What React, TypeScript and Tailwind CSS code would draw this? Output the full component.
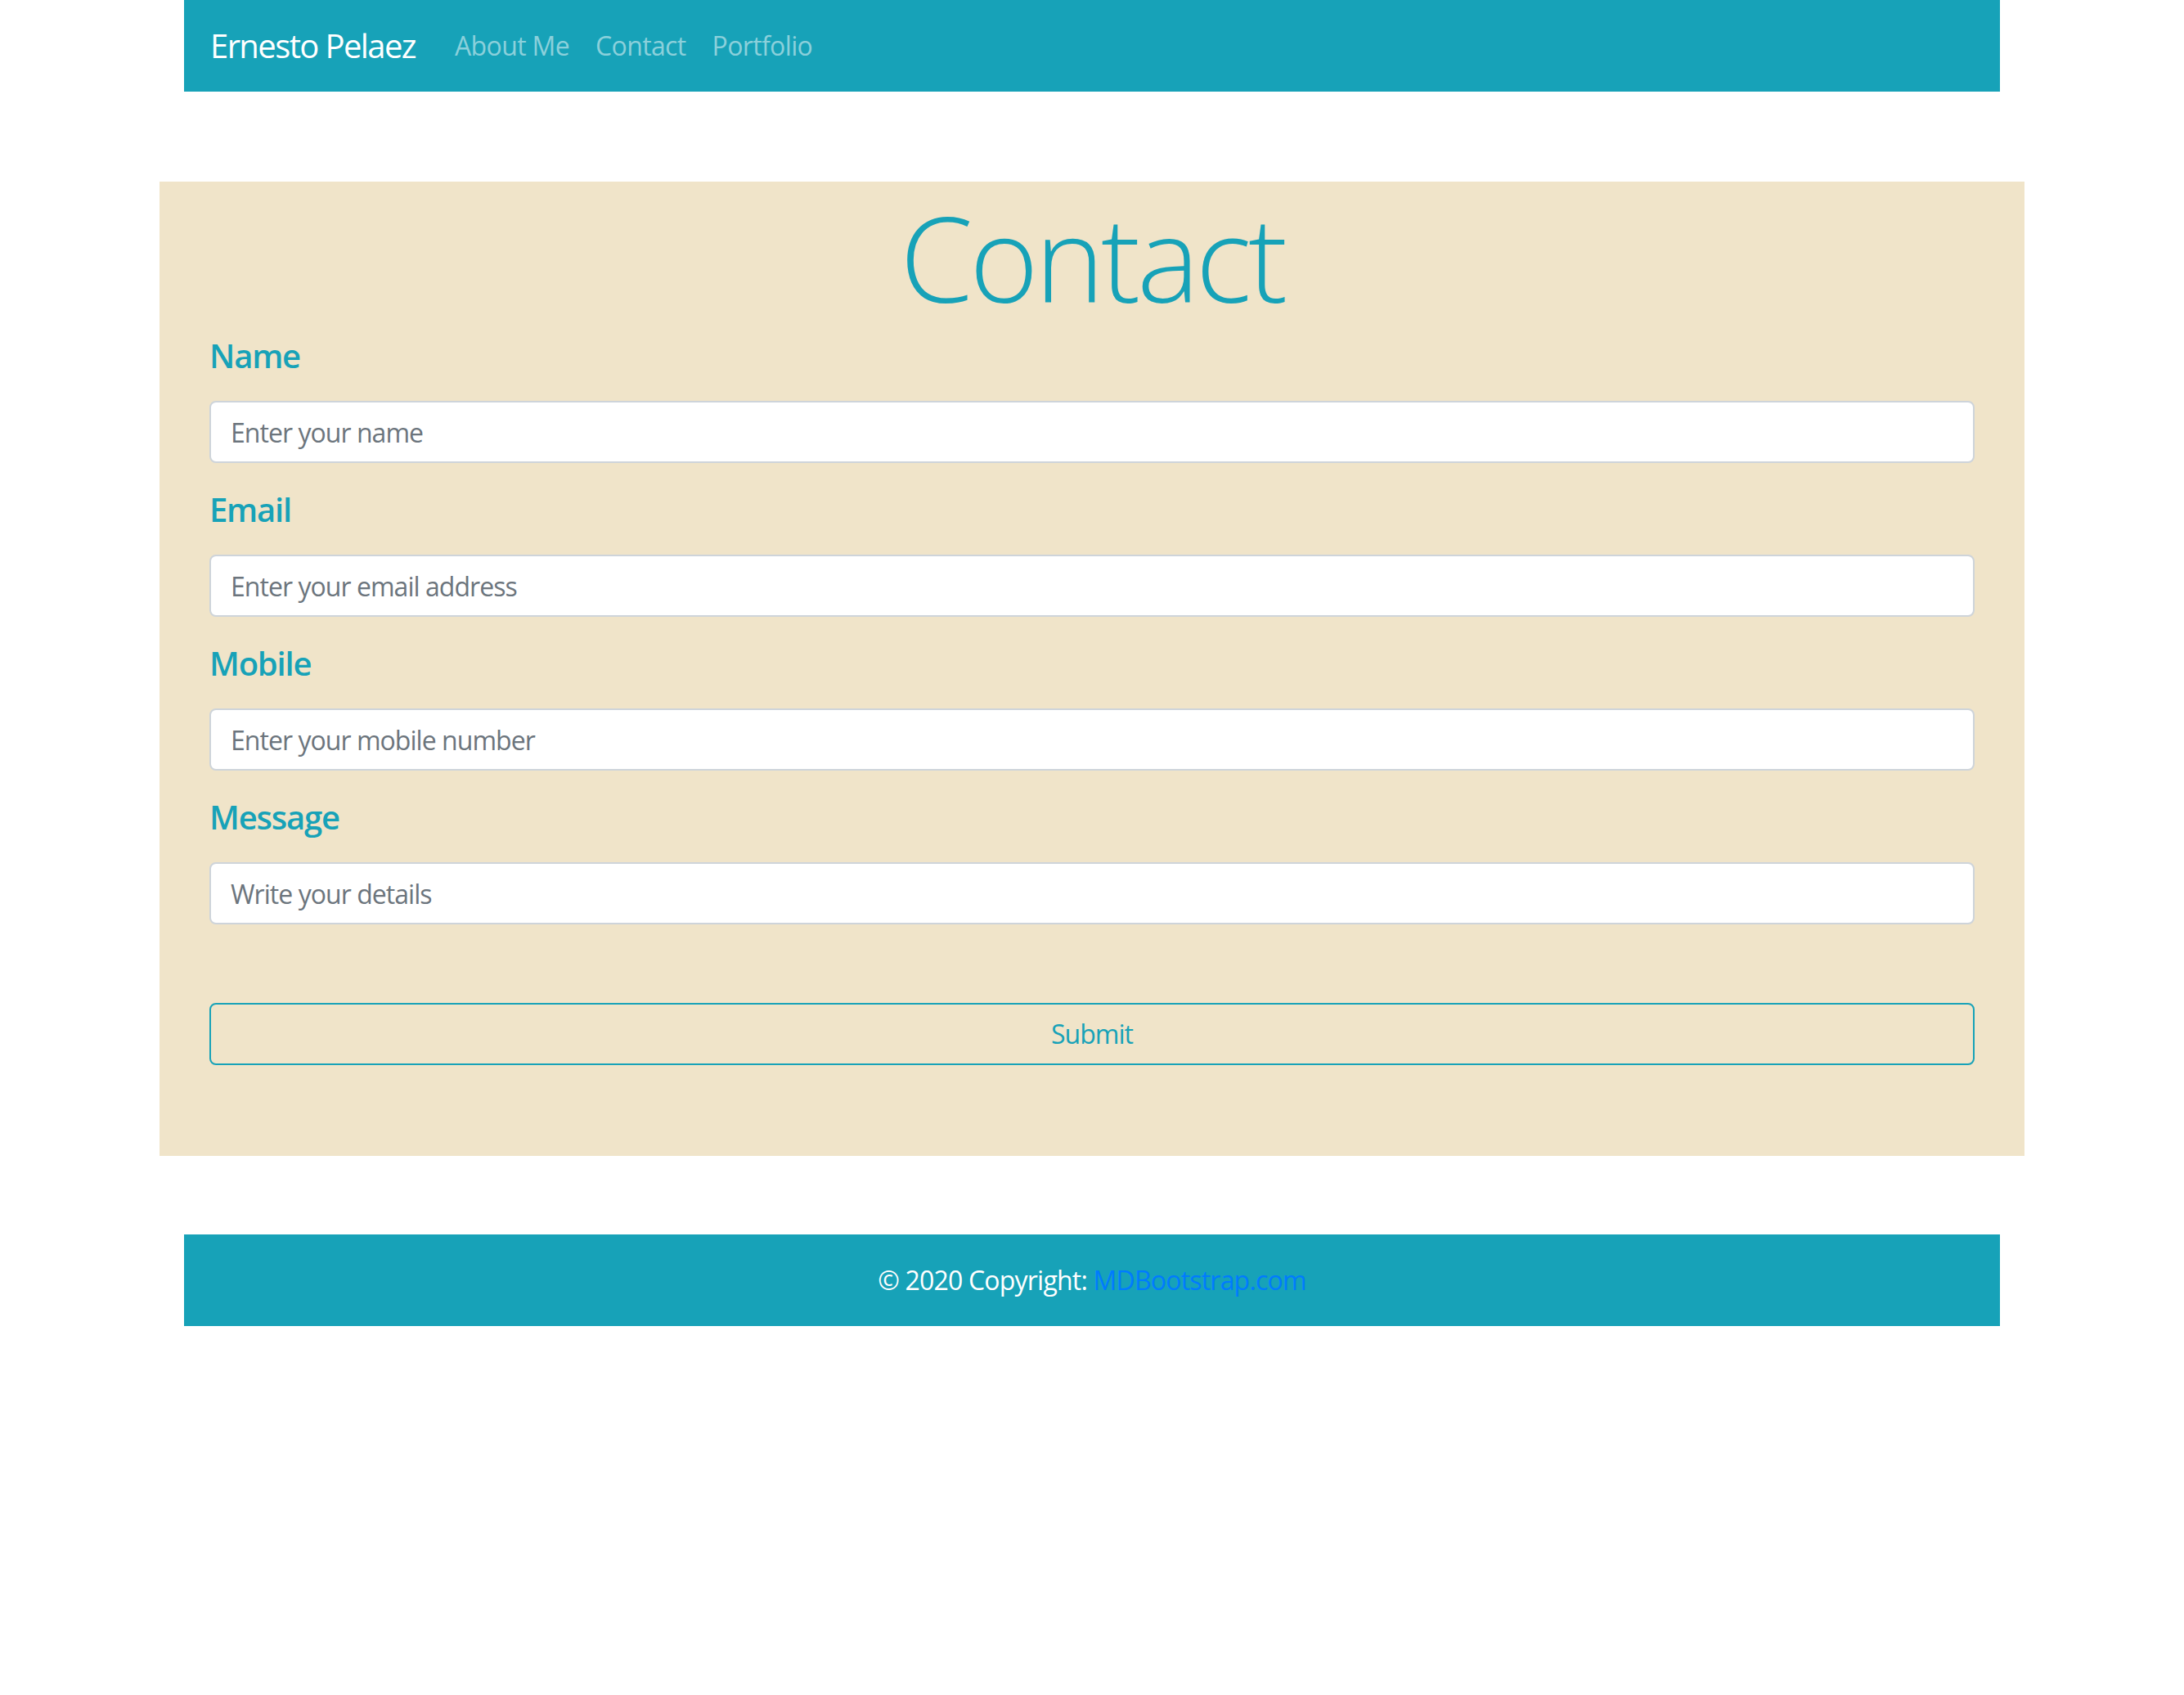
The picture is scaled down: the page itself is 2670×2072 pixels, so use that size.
import React from 'react';

const fields = [
  { label: 'Name', placeholder: 'Enter your name', type: 'text' },
  { label: 'Email', placeholder: 'Enter your email address', type: 'email' },
  { label: 'Mobile', placeholder: 'Enter your mobile number', type: 'tel' },
  { label: 'Message', placeholder: 'Write your details', type: 'text' },
];

export default function App() {
  return (
    <div className="min-h-[2072px] bg-white font-['Open_Sans','Noto_Sans',sans-serif]">
      {/* Navbar */}
      <nav className="mx-auto flex h-[112px] w-[2220px] items-center bg-[#17a2b8] px-8">
        <span className="mr-8 text-[40px] leading-[60px] tracking-[-0.04em] text-white">
          Ernesto Pelaez
        </span>
        <div className="flex items-center">
          {['About Me', 'Contact', 'Portfolio'].map((link) => (
            <a
              key={link}
              href="#"
              className="px-4 text-[32px] leading-[48px] tracking-[-0.02em] text-[#8bd0db]"
            >
              {link}
            </a>
          ))}
        </div>
      </nav>

      {/* Contact form */}
      <section className="mx-auto mt-[110px] w-[2280px] bg-[#f0e4c9] px-[61px] pt-[6px] pb-[111px]">
        <h1 className="text-center text-[144px] font-light leading-[173px] tracking-[-0.03em] text-[#17a2b8]">
          Contact
        </h1>
        <form className="mt-[10px]" onSubmit={(e) => e.preventDefault()}>
          {fields.map((f) => (
            <div key={f.label} className="mb-[33px]">
              <label className="mb-[31px] block text-[40px] font-semibold leading-[48px] tracking-[-0.03em] text-[#17a2b8]">
                {f.label}
              </label>
              <input
                type={f.type}
                placeholder={f.placeholder}
                className="block h-[76px] w-full rounded-[8px] border-2 border-[#ced4da] bg-white px-6 text-[32px] tracking-[-0.03em] text-[#495057] outline-none placeholder:text-[#6c757d]"
              />
            </div>
          ))}
          <button
            type="submit"
            className="mt-[96px] flex h-[76px] w-full items-center justify-center rounded-[8px] border-2 border-[#17a2b8] bg-transparent text-[32px] tracking-[-0.03em] text-[#17a2b8]"
          >
            Submit
          </button>
        </form>
      </section>

      {/* Footer */}
      <footer className="mx-auto mt-[96px] flex h-[112px] w-[2220px] items-center justify-center bg-[#17a2b8] text-[32px] tracking-[-0.025em] text-white">
        <span>
          © 2020 Copyright:{' '}
          <a href="#" className="text-[#007bff]">
            MDBootstrap.com
          </a>
        </span>
      </footer>
    </div>
  );
}
